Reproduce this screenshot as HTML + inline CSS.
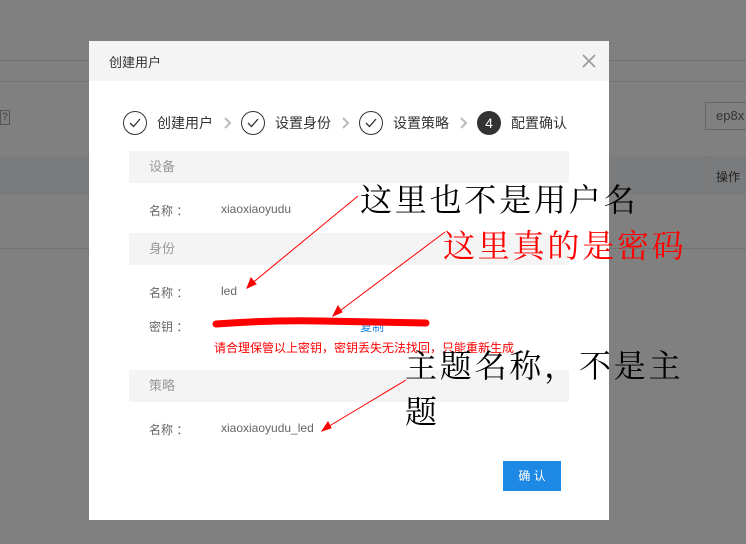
<!DOCTYPE html>
<html><head><meta charset="utf-8"><style>
body{margin:0;width:746px;height:544px;background:#808080;position:relative;overflow:hidden;font-family:"Liberation Sans","Noto Sans CJK SC",sans-serif;font-size:12px;color:#333}
.a{position:absolute}
.bar{position:absolute;left:129px;width:440px;height:32px;background:#f4f4f4;border-radius:2px;color:#999;font-size:13px;line-height:32px;text-indent:20px}
.lbl{position:absolute;left:149px;color:#666;font-size:12px}
.val{position:absolute;left:221px;color:#666;font-size:12px}
.step{position:absolute;top:111px;display:flex;align-items:center;font-size:14px;color:#333}
.c{width:24px;height:24px;border:1.3px solid #333;border-radius:50%;display:inline-flex;align-items:center;justify-content:center;margin-right:10px;box-sizing:border-box}
.chev{position:absolute;top:117px}
.ann{position:absolute;font-family:"Noto Serif CJK SC","Liberation Serif",serif;font-size:32px;letter-spacing:2.8px;line-height:36px;white-space:nowrap}
</style></head><body>
<div class="a" style="left:0;top:60px;width:746px;height:1px;background:#707070"></div>
<div class="a" style="left:0;top:81px;width:746px;height:1px;background:#737373"></div>
<div class="a" style="left:0;top:156px;width:746px;height:39px;background:#797b7d"></div>
<div class="a" style="left:0;top:248px;width:746px;height:1px;background:#737373"></div>
<div class="a" style="left:0;top:110px;width:8px;height:13px;border:1px solid #555;color:#555;font-size:11px;line-height:13px;text-align:center;font-weight:bold">?</div>
<div class="a" style="left:705px;top:102px;width:50px;height:28px;border:1px solid #666;box-sizing:border-box;color:#333;font-size:13px;line-height:26px;padding-left:10px">ep8x</div>
<div class="a" style="left:705px;top:156px;width:1px;height:39px;background:#777"></div>
<div class="a" style="left:716px;top:168px;color:#222;font-size:12px">操作</div>

<div class="a" style="left:89px;top:41px;width:520px;height:479px;background:#fff"></div>
<div class="a" style="left:89px;top:41px;width:520px;height:40px;background:#f4f4f4"></div>
<div class="a" style="left:109px;top:52px;font-size:13px;color:#333">创建用户</div>
<svg class="a" style="left:582px;top:54px" width="14" height="14"><path d="M1 1L13 13M13 1L1 13" stroke="#999" stroke-width="1.6"/></svg>

<div class="step" style="left:123px"><span class="c"><svg width="12" height="10"><path d="M1 5l3.5 3.5L11 1" fill="none" stroke="#333" stroke-width="1.3"/></svg></span>创建用户</div>
<svg class="chev" style="left:224px" width="8" height="12"><path d="M1 1l5 5-5 5" fill="none" stroke="#bbb" stroke-width="2"/></svg>
<div class="step" style="left:241px"><span class="c"><svg width="12" height="10"><path d="M1 5l3.5 3.5L11 1" fill="none" stroke="#333" stroke-width="1.3"/></svg></span>设置身份</div>
<svg class="chev" style="left:342px" width="8" height="12"><path d="M1 1l5 5-5 5" fill="none" stroke="#bbb" stroke-width="2"/></svg>
<div class="step" style="left:359px"><span class="c"><svg width="12" height="10"><path d="M1 5l3.5 3.5L11 1" fill="none" stroke="#333" stroke-width="1.3"/></svg></span>设置策略</div>
<svg class="chev" style="left:460px" width="8" height="12"><path d="M1 1l5 5-5 5" fill="none" stroke="#bbb" stroke-width="2"/></svg>
<div class="step" style="left:477px"><span class="c" style="background:#333;color:#fff;font-size:14px">4</span>配置确认</div>

<div class="bar" style="top:151px">设备</div>
<div class="lbl" style="top:202px">名称 ：</div><div class="val" style="top:202px">xiaoxiaoyudu</div>
<div class="bar" style="top:233px">身份</div>
<div class="lbl" style="top:284px">名称 ：</div><div class="val" style="top:284px">led</div>
<div class="lbl" style="top:318px">密钥 ：</div>
<div class="a" style="left:360px;top:318px;color:#1e88e5;font-size:12px">复制</div>
<svg class="a" style="left:210px;top:312px" width="220" height="20"><path d="M6 12 Q60 8 110 9 T216 11" stroke="#f00" stroke-width="7" fill="none" stroke-linecap="round"/></svg>
<div class="a" style="left:214px;top:339px;color:#f00;font-size:12px;white-space:nowrap">请合理保管以上密钥，密钥丢失无法找回，只能重新生成</div>
<div class="bar" style="top:370px">策略</div>
<div class="lbl" style="top:421px">名称 ：</div><div class="val" style="top:421px">xiaoxiaoyudu_led</div>
<div class="a" style="left:503px;top:461px;width:58px;height:30px;background:#1e88e5;color:#fff;font-size:12px;line-height:30px;text-align:center">确 认</div>

<svg class="a" style="left:0;top:0" width="746" height="544">
<g stroke="#f00" stroke-width="1" fill="#f00">
<line x1="358" y1="196" x2="250" y2="285"/><path d="M247 288l4-10 5 6z"/>
<line x1="445" y1="232" x2="337" y2="313"/><path d="M333 316l5-10 4 6z"/>
<line x1="406" y1="380" x2="326" y2="428"/><path d="M322 431l6-9 3 6z"/>
</g></svg>
<div class="ann" style="left:360px;top:180px;color:#000">这里也不是用户名</div>
<div class="ann" style="left:443px;top:226px;color:#f00">这里真的是密码</div>
<div class="ann" style="left:405px;top:346px;color:#000">主题名称，不是主</div>
<div class="ann" style="left:405px;top:392px;color:#000">题</div>
</body></html>
